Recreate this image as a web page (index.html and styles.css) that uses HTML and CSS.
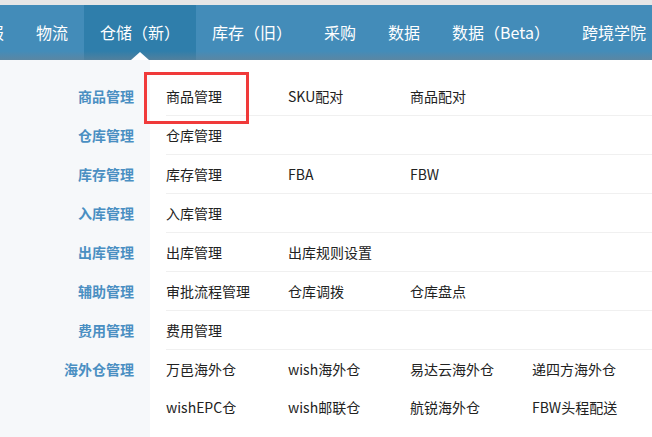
FILE: index.html
```html
<!DOCTYPE html>
<html lang="zh-CN">
<head>
    <meta charset="UTF-8">
    <meta name="viewport" content="width=device-width, initial-scale=1.0">
    <title>仓储（新）</title>
    <link rel="stylesheet" href="styles.css">
</head>
<body>
    <div class="top-strip"></div>
    <nav class="main-nav">
        <ul class="nav-list">
            <li class="nav-item">报</li>
            <li class="nav-item">物流</li>
            <li class="nav-item active">仓储（新）</li>
            <li class="nav-item">库存（旧）</li>
            <li class="nav-item">采购</li>
            <li class="nav-item">数据</li>
            <li class="nav-item">数据（Beta）</li>
            <li class="nav-item">跨境学院</li>
        </ul>
    </nav>

    <div class="mega-menu">
        <div class="menu-group">
            <div class="group-label">商品管理</div>
            <div class="group-links">
                <a class="link">商品管理</a>
                <a class="link">SKU配对</a>
                <a class="link">商品配对</a>
            </div>
        </div>
        <div class="menu-group">
            <div class="group-label">仓库管理</div>
            <div class="group-links">
                <a class="link">仓库管理</a>
            </div>
        </div>
        <div class="menu-group">
            <div class="group-label">库存管理</div>
            <div class="group-links">
                <a class="link">库存管理</a>
                <a class="link">FBA</a>
                <a class="link">FBW</a>
            </div>
        </div>
        <div class="menu-group">
            <div class="group-label">入库管理</div>
            <div class="group-links">
                <a class="link">入库管理</a>
            </div>
        </div>
        <div class="menu-group">
            <div class="group-label">出库管理</div>
            <div class="group-links">
                <a class="link">出库管理</a>
                <a class="link">出库规则设置</a>
            </div>
        </div>
        <div class="menu-group">
            <div class="group-label">辅助管理</div>
            <div class="group-links">
                <a class="link">审批流程管理</a>
                <a class="link">仓库调拨</a>
                <a class="link">仓库盘点</a>
            </div>
        </div>
        <div class="menu-group">
            <div class="group-label">费用管理</div>
            <div class="group-links">
                <a class="link">费用管理</a>
            </div>
        </div>
        <div class="menu-group last">
            <div class="group-label">海外仓管理</div>
            <div class="group-links">
                <a class="link">万邑海外仓</a>
                <a class="link">wish海外仓</a>
                <a class="link">易达云海外仓</a>
                <a class="link">递四方海外仓</a>
                <a class="link">wishEPC仓</a>
                <a class="link">wish邮联仓</a>
                <a class="link">航锐海外仓</a>
                <a class="link">FBW头程配送</a>
            </div>
        </div>

        <div class="highlight-box"></div>
    </div>
</body>
</html>
```

FILE: styles.css
```css
* {
    box-sizing: border-box;
}

body {
    margin: 0;
    font-family: "Noto Sans CJK SC", "Noto Sans", sans-serif;
    background: #fff;
    color: #222;
    overflow: hidden;
}

.top-strip {
    height: 5px;
    background-color: #e6e6e6;
}

.main-nav {
    position: relative;
    height: 55px;
    background-color: #438cb9;
    overflow: hidden;
}

/* soft fade at the bottom edge of the bar */
.main-nav::after {
    content: "";
    position: absolute;
    left: 0;
    right: 0;
    bottom: 0;
    height: 9px;
    background: linear-gradient(to bottom, rgba(110, 130, 145, 0), rgba(110, 130, 145, 0.55));
    pointer-events: none;
}

.nav-list {
    display: flex;
    margin: 0 0 0 -28px;
    padding: 0;
    list-style: none;
    white-space: nowrap;
}

.nav-item {
    position: relative;
    padding: 0 16px;
    line-height: 55px;
    font-size: 16px;
    color: #fff;
}

.nav-item.active {
    background-color: #2f7eab;
}

.nav-item.active::before {
    content: "";
    position: absolute;
    bottom: 0;
    left: 50%;
    margin-left: -9px;
    border-left: 9px solid transparent;
    border-right: 9px solid transparent;
    border-bottom: 8px solid #fff;
    z-index: 2;
}

.mega-menu {
    position: relative;
    padding-top: 17px;
    min-height: 377px;
    background: linear-gradient(to right, #f6f8fa 150px, #fff 150px);
}

.menu-group {
    display: grid;
    grid-template-columns: 150px 1fr;
}

.group-label {
    padding-right: 16px;
    text-align: right;
    line-height: 38px;
    font-size: 14px;
    font-weight: bold;
    color: #4a8fc2;
}

.group-links {
    display: grid;
    grid-template-columns: repeat(4, 122px);
    margin-left: 16px;
    border-bottom: 1px solid #f0f0f0;
}

.menu-group.last .group-links {
    border-bottom: none;
}

.link {
    line-height: 38px;
    font-size: 14px;
    color: #222;
    white-space: nowrap;
}

.highlight-box {
    position: absolute;
    left: 144px;
    top: 12px;
    width: 105px;
    height: 52px;
    border: 3px solid #f03a3a;
}
```
